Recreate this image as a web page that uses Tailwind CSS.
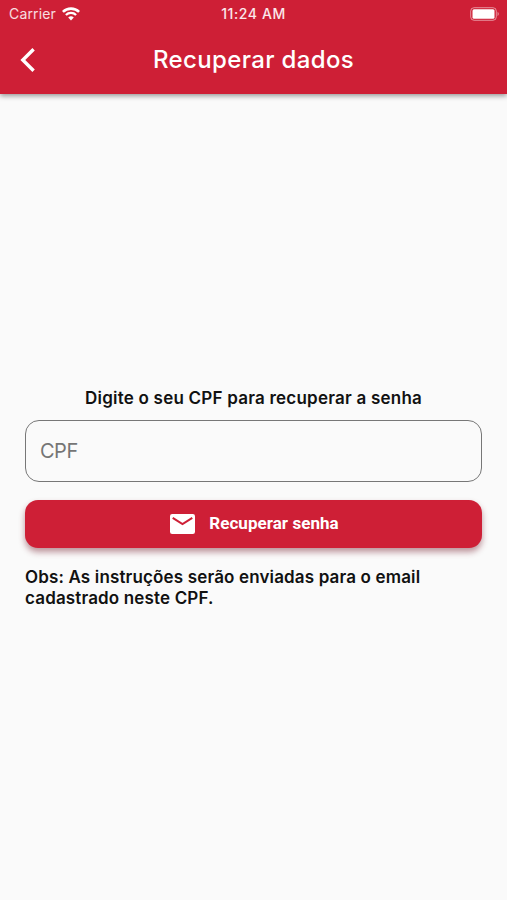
<!DOCTYPE html>
<html lang="pt-BR">
  <head>
    <meta charset="UTF-8" />
    <meta name="viewport" content="width=device-width, initial-scale=1.0" />
    <title>Recuperar dados</title>
    <script src="https://cdn.jsdelivr.net/npm/@tailwindcss/browser@4"></script>
  </head>
  <body
    class="flex h-screen flex-col overflow-hidden bg-[#fafafa] font-['Inter',sans-serif] text-[#111111]"
  >
    <!-- Header -->
    <header
      class="h-[94px] shrink-0 bg-[#ce1f36] text-white shadow-[0_2px_5px_rgba(0,0,0,0.4)]"
    >
      <!-- Status bar -->
      <div class="grid h-[27px] grid-cols-3 items-center pl-[8px] pr-[8px]">
        <div class="flex items-center gap-[6px] pl-px">
          <span class="text-[14px] tracking-[0.15px] text-white/85">Carrier</span>
          <svg class="h-[14px] w-[18px]" viewBox="0 0 18 14" fill="none" stroke="currentColor">
            <path d="M0.9 4.9a11.6 11.6 0 0 1 16.2 0" stroke-width="2.6" />
            <path d="M3.9 8a7.3 7.3 0 0 1 10.2 0" stroke-width="2.3" />
            <path d="M9 13.4 6.2 10.6a4 4 0 0 1 5.6 0z" fill="currentColor" stroke="none" />
          </svg>
        </div>
        <span class="text-center text-[14px] font-medium tracking-[0.6px] text-white/90">11:24 AM</span>
        <svg class="-mr-px h-[14px] w-[30px] justify-self-end" viewBox="0 0 30 14" fill="none">
          <rect x="0.7" y="0.7" width="25.6" height="12.6" rx="3.4" stroke="white" stroke-opacity="0.5" />
          <rect x="2.5" y="2.2" width="22" height="9.6" rx="1.5" fill="white" />
          <path d="M27.6 4.8q2.2 2.2 0 4.4z" fill="white" fill-opacity="0.6" />
        </svg>
      </div>
      <!-- Title bar -->
      <div class="grid h-[66px] grid-cols-[60px_1fr_60px] items-center">
        <button class="pl-[20px]" aria-label="Voltar">
          <svg class="h-[24px] w-[16px]" viewBox="0 0 16 24" fill="none" stroke="currentColor" stroke-width="3.4">
            <path d="M13.6 1.2 2.8 12l10.8 10.8" />
          </svg>
        </button>
        <h1 class="text-center text-[24px] font-medium tracking-[0.35px]">Recuperar dados</h1>
      </div>
    </header>

    <!-- Form -->
    <main class="flex flex-1 flex-col px-[25px] pt-[294px]">
      <label for="cpf" class="text-center text-[17px] font-semibold leading-[21px] tracking-[0.22px] whitespace-nowrap">Digite o seu CPF para recuperar a senha</label>
      <input
        id="cpf"
        type="text"
        placeholder="CPF"
        class="mt-[11px] h-[62px] shrink-0 rounded-[14px] border border-[#777777] px-[14px] text-[20px] tracking-[-0.5px] placeholder:text-[#757575]"
      />
      <button
        class="mt-[18px] flex h-[48px] shrink-0 items-center justify-center gap-[14px] rounded-[13px] bg-[#ce1f36] pl-[2px] text-white shadow-[0_4px_6px_rgba(110,20,35,0.45)]"
      >
        <svg class="h-[20px] w-[25px]" viewBox="0 0 25 20">
          <rect width="25" height="20" rx="2.2" fill="white" />
          <path d="M2.7 3.9 12.5 10l9.8-6.1" fill="none" stroke="#ce1f36" stroke-width="2" />
        </svg>
        <span class="font-['Roboto',sans-serif] text-[17px] font-bold tracking-[0.05px]">Recuperar senha</span>
      </button>
      <p class="mt-[19px] text-[17px] font-semibold leading-[21px] tracking-[0.15px] whitespace-nowrap">
        Obs: As instruções serão enviadas para o email<br />cadastrado neste CPF.
      </p>
    </main>
  </body>
</html>
